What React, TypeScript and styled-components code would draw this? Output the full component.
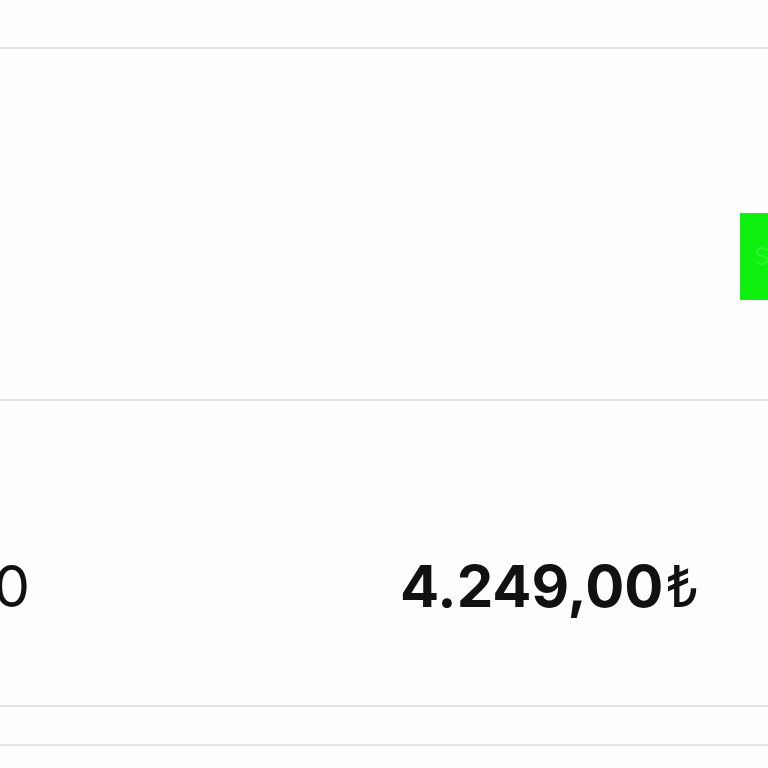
import styled, { createGlobalStyle } from 'styled-components';

const GlobalStyle = createGlobalStyle`
  html, body {
    margin: 0;
    padding: 0;
    background: #fefefe;
    overflow: hidden;
  }
  body {
    font-family: Inter, "Liberation Sans", sans-serif;
    color: #111;
  }
`;

const rowBorder = '#e4e4e4';

export default function App() {
  return (
    <>
      <GlobalStyle />
      <STable>
        <SRow $height={47} />
        <SRow $height={350}>
          <SSpacer />
          <SActionCell>
            <SGreenButton>Sepete Ekle</SGreenButton>
          </SActionCell>
        </SRow>
        <SRow $height={304}>
          <SCutCell>
            <SAmount>4.249,00</SAmount>
          </SCutCell>
          <STotalCell>
            <SAmount $bold>
              4.249,00<SCurrency>₺</SCurrency>
            </SAmount>
          </STotalCell>
        </SRow>
        <SRow $height={37} />
        <SRow $height={30} $last />
      </STable>
    </>
  );
}

const STable = styled.div`
  width: 768px;
  display: flex;
  flex-direction: column;
`;

const SRow = styled.div<{ $height: number; $last?: boolean }>`
  height: ${({ $height }) => $height}px;
  display: flex;
  align-items: stretch;
  border-bottom: ${({ $last }) => ($last ? 'none' : `2px solid ${rowBorder}`)};
  overflow: hidden;
`;

const SSpacer = styled.div`
  flex: 1;
`;

const SActionCell = styled.div`
  width: 28px;
  display: flex;
  align-items: flex-start;
  padding-top: 164px;
  overflow: visible;
`;

const SGreenButton = styled.div`
  flex-shrink: 0;
  width: 160px;
  height: 87px;
  background: #0ef00e;
  color: #2af52a;
  font-size: 24px;
  display: flex;
  align-items: center;
  padding-left: 14px;
  white-space: nowrap;
`;

const SCutCell = styled.div`
  width: 30px;
  display: flex;
  justify-content: flex-end;
  align-items: flex-start;
  padding-top: 150px;
  white-space: nowrap;
`;

const STotalCell = styled.div`
  display: flex;
  align-items: flex-start;
  padding-top: 150px;
  padding-left: 370px;
  white-space: nowrap;
`;

const SAmount = styled.span<{ $bold?: boolean }>`
  font-size: 58px;
  line-height: 70px;
  font-weight: ${({ $bold }) => ($bold ? 700 : 400)};
  color: #111;
  flex-shrink: 0;
`;

const SCurrency = styled.span`
  font-weight: 400;
  margin-left: 2px;
`;
